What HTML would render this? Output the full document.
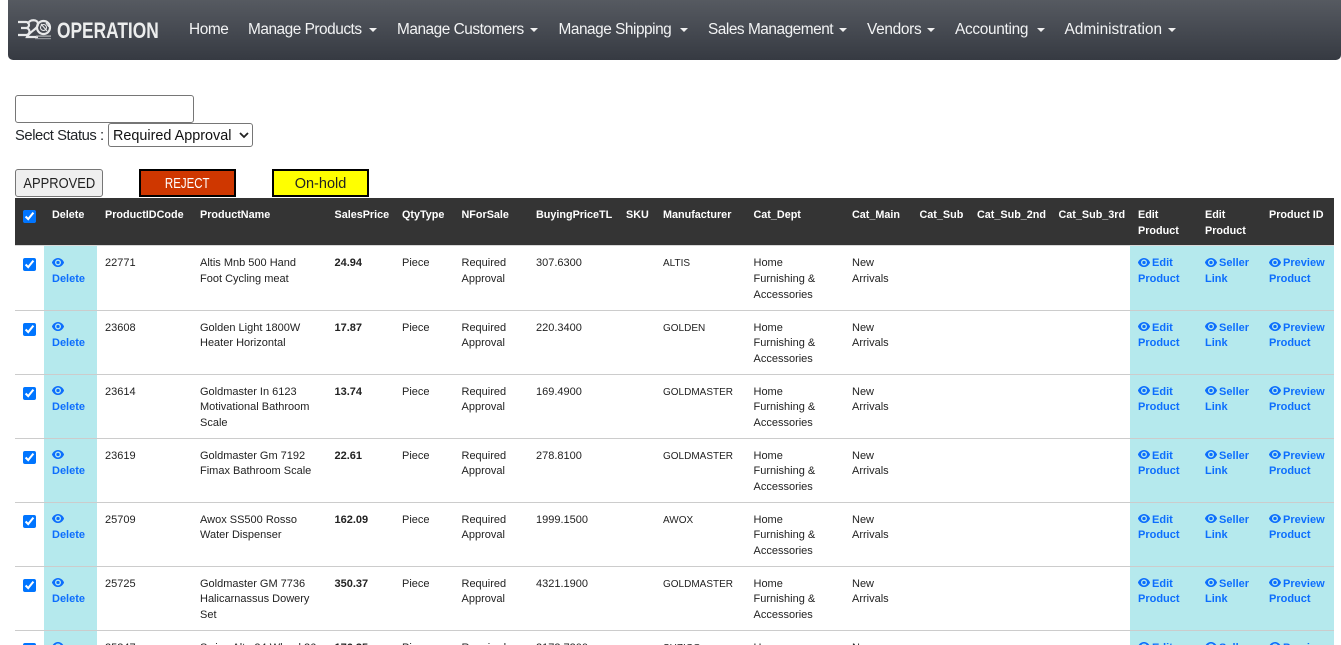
<!DOCTYPE html>
<html><head><meta charset="utf-8"><title>Operation</title>
<style>
html,body{margin:0;padding:0;background:#fff;width:1341px;height:645px;overflow:hidden;font-family:"Liberation Sans",sans-serif;color:#212529}
#w{position:absolute;left:0;top:0;width:1341px;height:645px;overflow:hidden;background:#fff}
.nav{position:absolute;left:8px;top:0;width:1333px;height:60px;background:linear-gradient(#565a61,#363a42);border-radius:0 0 5px 5px}
.n{position:absolute;top:21px;font-size:15.4px;line-height:18px;color:#f2f3f4;white-space:nowrap}
.m{letter-spacing:-.47px}
.c{position:absolute;top:28px;width:0;height:0;border-top:4px solid #f0f0f0;border-left:4px solid transparent;border-right:4px solid transparent}
.op{position:absolute;left:57px;top:18px;font-size:22.5px;line-height:25px;font-weight:bold;color:#eceded;transform:scaleX(.77);transform-origin:0 0;white-space:nowrap}
.abs{position:absolute;box-sizing:border-box}
.s{display:inline-block;transform-origin:50% 50%}
table{position:absolute;left:15px;top:198px;width:1319px;table-layout:fixed;border-collapse:separate;border-spacing:0;font-size:11px;line-height:15.75px}
td,th{padding:8px 0 0 8px;vertical-align:top;text-align:left;overflow:hidden;box-sizing:border-box;border-bottom:1px solid #ccc;white-space:nowrap}
thead th{background:#343434;color:#fff;font-weight:bold;font-size:10.8px;height:48px;padding-top:10px;border-bottom:1px solid #d8d8d8}
tbody td{padding-top:9.6px;color:#222}
tbody tr{height:64px}
tbody tr:first-child{height:65px}
tbody tr:first-child td{padding-top:10px}
td.b{background:#b5e9ed}
td a{color:#0d6efd;font-weight:bold;text-decoration:none}
input[type=checkbox]{margin:0;width:13px;height:13px;display:block;accent-color:#0075ff}
td.k,th.k,tbody tr:first-child td.k{padding:0 0 0 8px}
td.k input{margin-top:12px}
th.k input{margin-top:12px}
svg.e{width:12px;height:9px;vertical-align:-0.5px;fill:#0d6efd;margin-right:-1px}
.u{font-size:10px}
tbody tr.l{height:14px}
tr.l td{border-bottom:0;height:14px}
tr.l td div{height:4.4px;overflow:hidden}
tr.l td.k div{height:14px}
</style></head><body>
<svg width="0" height="0" style="position:absolute"><defs><symbol id="eye" viewBox="0 0 576 432"><path d="M288 0C160 0 56 86 4 200a32 32 0 0 0 0 32c52 114 156 200 284 200s232-86 284-200a32 32 0 0 0 0-32C520 86 416 0 288 0zm0 360a144 144 0 1 1 0-288 144 144 0 0 1 0 288zm0-224a80 80 0 1 0 0 160 80 80 0 0 0 0-160z"/></symbol></defs></svg>
<div id="w">
<div class="nav"></div>
<svg class="abs" style="left:16px;top:16px" width="40" height="26" viewBox="0 0 40 26">
<g fill="none" stroke="#e8e9ea" stroke-width="2.2"><path d="M2 6h8a3 3 0 0 1 0 6H5M10 12a3.500 3.500 0 0 1 0 7H2"/><path d="M12 8c1-5 10-5 10 0 0 5-8 7-11 13h11"/><circle cx="27.500" cy="11.500" r="6.500"/></g>
<g fill="none" stroke="#e8e9ea" stroke-width="1.100"><circle cx="27.500" cy="11.500" r="3"/><path d="M25 8l6 7M30 7l3 4"/></g>
<rect x="20" y="19.500" width="15" height="1.200" fill="#b8babc"/><rect x="19" y="22" width="16" height="1.200" fill="#8f9297"/></svg>
<div class="op">OPERATION</div>
<div class="n" style="left:189px;letter-spacing:-.4px">Home</div>
<div class="n m" style="left:248px">Manage Products</div><div class="c" style="left:369px"></div>
<div class="n m" style="left:397px">Manage Customers</div><div class="c" style="left:530px"></div>
<div class="n m" style="left:558.500px">Manage Shipping</div><div class="c" style="left:680px"></div>
<div class="n m" style="left:708px">Sales Management</div><div class="c" style="left:839px"></div>
<div class="n" style="left:867px;letter-spacing:-.3px">Vendors</div><div class="c" style="left:927px"></div>
<div class="n" style="left:955px;letter-spacing:-.3px">Accounting</div><div class="c" style="left:1037px"></div>
<div class="n" style="left:1064.500px">Administration</div><div class="c" style="left:1168px"></div>

<input class="abs" type="text" style="left:15px;top:95px;width:179px;height:28px;border:1px solid #767676;border-radius:3px;margin:0;padding:0;background:#fff">
<div class="abs" style="left:15px;top:126px;font-size:14.800px;line-height:20px;letter-spacing:-.45px;white-space:nowrap">Select Status :</div>
<div class="abs" style="left:108px;top:123px;width:145px;height:24px;border:1px solid #767676;border-radius:3px;background:#fff;font-size:14.400px;line-height:24px;padding-left:4px;white-space:nowrap;color:#111">Required Approval
<svg style="position:absolute;left:130px;top:8px" width="10" height="7" viewBox="0 0 10 7"><path d="M1 1l4 4 4-4" fill="none" stroke="#222" stroke-width="1.800"/></svg></div>
<div class="abs" style="left:15px;top:169px;width:88px;height:28px;border:1px solid #767676;border-radius:3px;background:#efefef;font-size:14.500px;line-height:28px;text-align:center;color:#222"><span class="s" style="transform:scaleX(.89)">APPROVED</span></div>
<div class="abs" style="left:139px;top:169px;width:97px;height:28px;border:2px solid #000;background:#cf3700;font-size:14.500px;line-height:26px;text-align:center;color:#fff"><span class="s" style="transform:scaleX(.79)">REJECT</span></div>
<div class="abs" style="left:272px;top:169px;width:97px;height:28px;border:2px solid #000;background:#ff0;font-size:14.500px;line-height:26px;text-align:center;color:#222">On-hold</div>

<table>
<colgroup><col style="width:29px"><col style="width:53px"><col style="width:95px"><col style="width:134.500px"><col style="width:67.500px"><col style="width:59.500px"><col style="width:74.500px"><col style="width:90px"><col style="width:37px"><col style="width:90.500px"><col style="width:98.500px"><col style="width:67.500px"><col style="width:57.500px"><col style="width:81.500px"><col style="width:79.500px"><col style="width:67px"><col style="width:64px"><col style="width:73px"></colgroup>
<thead><tr><th class="k"><input type="checkbox" checked></th><th>Delete</th><th>ProductIDCode</th><th>ProductName</th><th>SalesPrice</th><th>QtyType</th><th>NForSale</th><th>BuyingPriceTL</th><th>SKU</th><th>Manufacturer</th><th>Cat_Dept</th><th>Cat_Main</th><th>Cat_Sub</th><th>Cat_Sub_2nd</th><th>Cat_Sub_3rd</th><th>Edit<br>Product</th><th>Edit<br>Product</th><th>Product ID</th></tr></thead>
<tbody>
<tr><td class="k"><input type="checkbox" checked></td><td class="b"><a href="#"><svg class="e"><use href="#eye"/></svg><br>Delete</a></td><td>22771</td><td>Altis Mnb 500 Hand<br>Foot Cycling meat</td><td><b>24.94</b></td><td>Piece</td><td>Required<br>Approval</td><td>307.6300</td><td></td><td><span class="u">ALTIS</span></td><td>Home<br>Furnishing &amp;<br>Accessories</td><td>New<br>Arrivals</td><td></td><td></td><td></td><td class="b"><a href="#"><svg class="e"><use href="#eye"/></svg> Edit<br>Product</a></td><td class="b"><a href="#"><svg class="e"><use href="#eye"/></svg> Seller<br>Link</a></td><td class="b"><a href="#"><svg class="e"><use href="#eye"/></svg> Preview<br>Product</a></td></tr>
<tr><td class="k"><input type="checkbox" checked></td><td class="b"><a href="#"><svg class="e"><use href="#eye"/></svg><br>Delete</a></td><td>23608</td><td>Golden Light 1800W<br>Heater Horizontal</td><td><b>17.87</b></td><td>Piece</td><td>Required<br>Approval</td><td>220.3400</td><td></td><td><span class="u">GOLDEN</span></td><td>Home<br>Furnishing &amp;<br>Accessories</td><td>New<br>Arrivals</td><td></td><td></td><td></td><td class="b"><a href="#"><svg class="e"><use href="#eye"/></svg> Edit<br>Product</a></td><td class="b"><a href="#"><svg class="e"><use href="#eye"/></svg> Seller<br>Link</a></td><td class="b"><a href="#"><svg class="e"><use href="#eye"/></svg> Preview<br>Product</a></td></tr>
<tr><td class="k"><input type="checkbox" checked></td><td class="b"><a href="#"><svg class="e"><use href="#eye"/></svg><br>Delete</a></td><td>23614</td><td>Goldmaster In 6123<br>Motivational Bathroom<br>Scale</td><td><b>13.74</b></td><td>Piece</td><td>Required<br>Approval</td><td>169.4900</td><td></td><td><span class="u">GOLDMASTER</span></td><td>Home<br>Furnishing &amp;<br>Accessories</td><td>New<br>Arrivals</td><td></td><td></td><td></td><td class="b"><a href="#"><svg class="e"><use href="#eye"/></svg> Edit<br>Product</a></td><td class="b"><a href="#"><svg class="e"><use href="#eye"/></svg> Seller<br>Link</a></td><td class="b"><a href="#"><svg class="e"><use href="#eye"/></svg> Preview<br>Product</a></td></tr>
<tr><td class="k"><input type="checkbox" checked></td><td class="b"><a href="#"><svg class="e"><use href="#eye"/></svg><br>Delete</a></td><td>23619</td><td>Goldmaster Gm 7192<br>Fimax Bathroom Scale</td><td><b>22.61</b></td><td>Piece</td><td>Required<br>Approval</td><td>278.8100</td><td></td><td><span class="u">GOLDMASTER</span></td><td>Home<br>Furnishing &amp;<br>Accessories</td><td>New<br>Arrivals</td><td></td><td></td><td></td><td class="b"><a href="#"><svg class="e"><use href="#eye"/></svg> Edit<br>Product</a></td><td class="b"><a href="#"><svg class="e"><use href="#eye"/></svg> Seller<br>Link</a></td><td class="b"><a href="#"><svg class="e"><use href="#eye"/></svg> Preview<br>Product</a></td></tr>
<tr><td class="k"><input type="checkbox" checked></td><td class="b"><a href="#"><svg class="e"><use href="#eye"/></svg><br>Delete</a></td><td>25709</td><td>Awox SS500 Rosso<br>Water Dispenser</td><td><b>162.09</b></td><td>Piece</td><td>Required<br>Approval</td><td>1999.1500</td><td></td><td><span class="u">AWOX</span></td><td>Home<br>Furnishing &amp;<br>Accessories</td><td>New<br>Arrivals</td><td></td><td></td><td></td><td class="b"><a href="#"><svg class="e"><use href="#eye"/></svg> Edit<br>Product</a></td><td class="b"><a href="#"><svg class="e"><use href="#eye"/></svg> Seller<br>Link</a></td><td class="b"><a href="#"><svg class="e"><use href="#eye"/></svg> Preview<br>Product</a></td></tr>
<tr><td class="k"><input type="checkbox" checked></td><td class="b"><a href="#"><svg class="e"><use href="#eye"/></svg><br>Delete</a></td><td>25725</td><td>Goldmaster GM 7736<br>Halicarnassus Dowery<br>Set</td><td><b>350.37</b></td><td>Piece</td><td>Required<br>Approval</td><td>4321.1900</td><td></td><td><span class="u">GOLDMASTER</span></td><td>Home<br>Furnishing &amp;<br>Accessories</td><td>New<br>Arrivals</td><td></td><td></td><td></td><td class="b"><a href="#"><svg class="e"><use href="#eye"/></svg> Edit<br>Product</a></td><td class="b"><a href="#"><svg class="e"><use href="#eye"/></svg> Seller<br>Link</a></td><td class="b"><a href="#"><svg class="e"><use href="#eye"/></svg> Preview<br>Product</a></td></tr>
<tr class="l"><td class="k"><div><input type="checkbox" checked></div></td><td class="b"><div><a href="#"><svg class="e"><use href="#eye"/></svg></a></div></td><td><div>25847</div></td><td><div>Swing Alto 24 Wheel 26</div></td><td><div><b>176.35</b></div></td><td><div>Piece</div></td><td><div>Required</div></td><td><div>2173.7300</div></td><td></td><td><div><span class="u">SUZICO</span></div></td><td><div>Home</div></td><td><div>New</div></td><td></td><td></td><td></td><td class="b"><div><a href="#"><svg class="e"><use href="#eye"/></svg> Edit</a></div></td><td class="b"><div><a href="#"><svg class="e"><use href="#eye"/></svg> Seller</a></div></td><td class="b"><div><a href="#"><svg class="e"><use href="#eye"/></svg> Preview</a></div></td></tr>
</tbody></table>
</div>
</body></html>
